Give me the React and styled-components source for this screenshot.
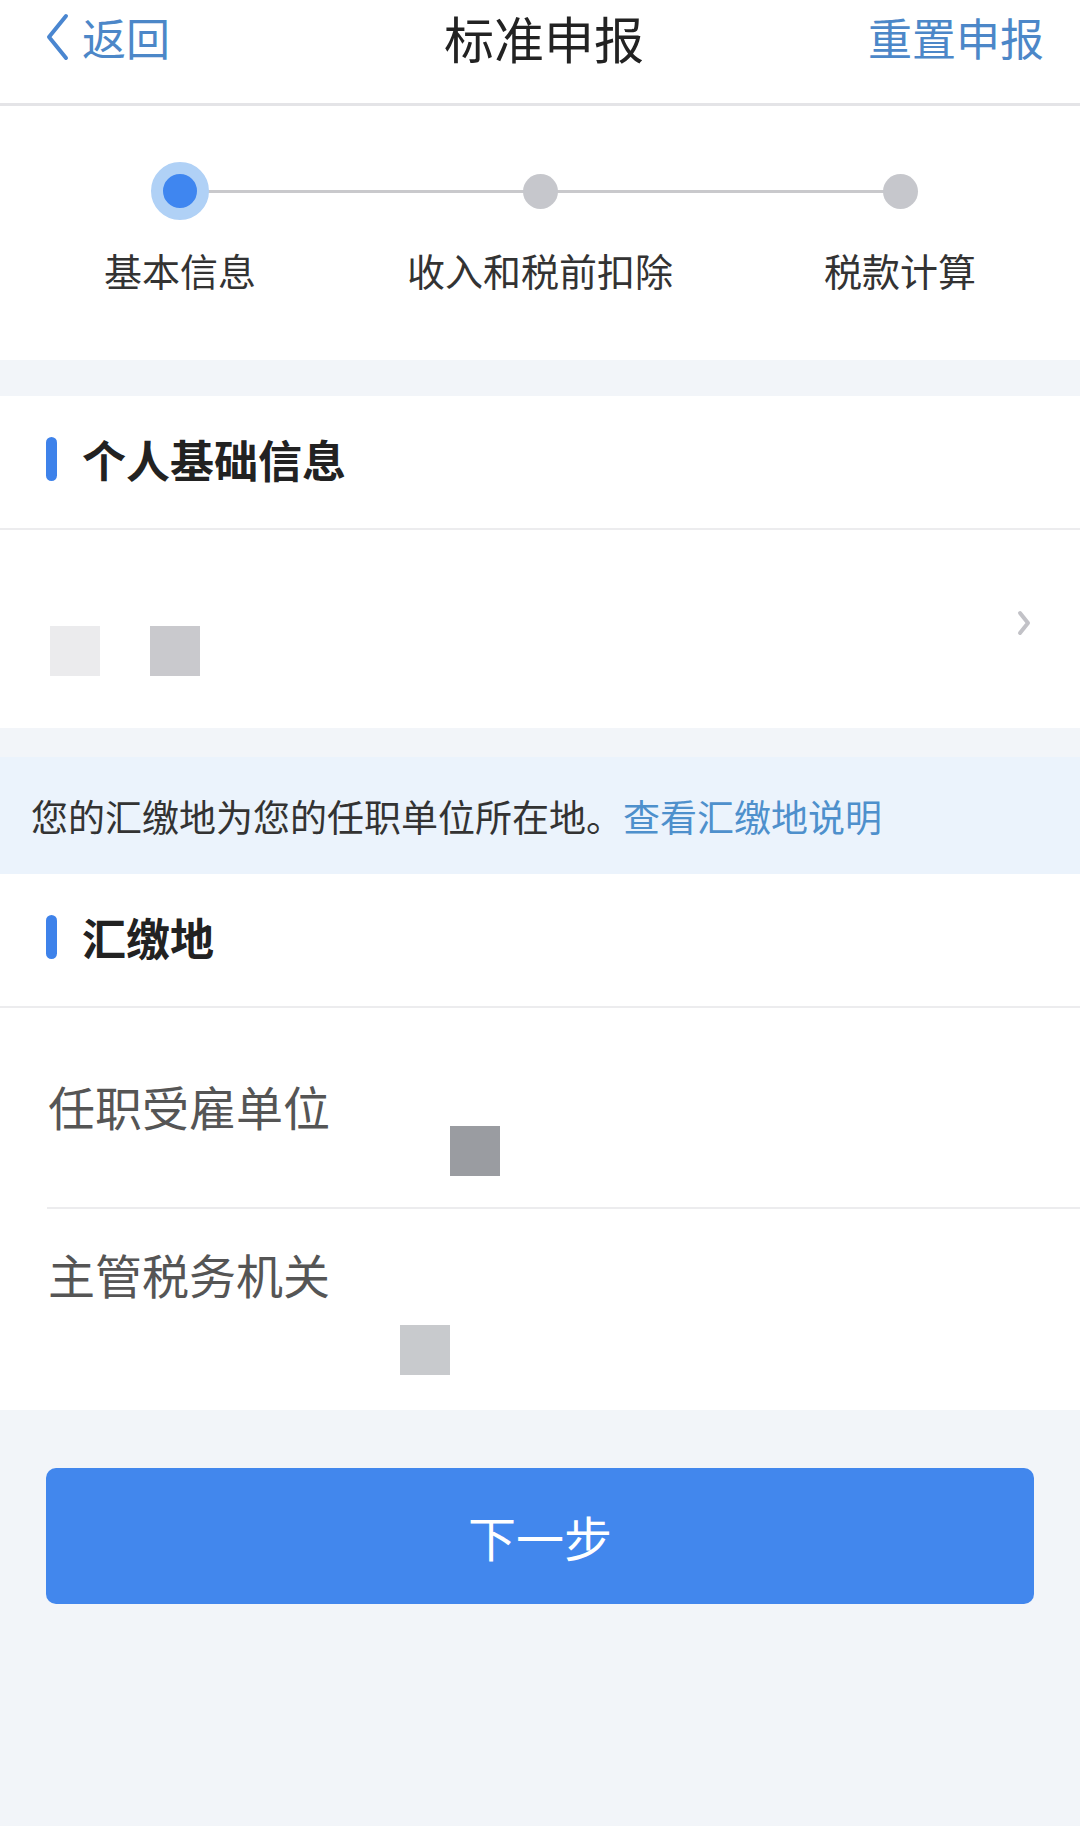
import React from "react";
import styled, { createGlobalStyle } from "styled-components";

const GlobalStyle = createGlobalStyle`
  html, body {
    margin: 0;
    padding: 0;
    background: #f2f5f9;
  }
  body {
    font-family: "Noto Sans CJK SC", "Noto Sans", sans-serif;
    color: #333;
  }
  * {
    box-sizing: border-box;
  }
`;

const steps = ["基本信息", "收入和税前扣除", "税款计算"];

function App() {
  return (
    <Page>
      <GlobalStyle />
      <Header>
        <Back>
          <svg width="26" height="48" viewBox="0 0 26 48">
            <path d="M22 3 L5 24 L22 45" fill="none" stroke="#4a86d0" strokeWidth="4" strokeLinecap="round" strokeLinejoin="round" />
          </svg>
          <span>返回</span>
        </Back>
        <Title>标准申报</Title>
        <Reset>重置申报</Reset>
      </Header>

      <Stepper>
        {steps.map((label, index) => (
          <Step key={label} last={index === steps.length - 1}>
            <DotBox>
              <Dot active={index === 0} />
            </DotBox>
            <StepLabel>{label}</StepLabel>
          </Step>
        ))}
      </Stepper>

      <Card>
        <SectionHead>
          <Bar />
          <SectionTitle>个人基础信息</SectionTitle>
        </SectionHead>
        <InfoRow>
          <Blocks>
            <Blur tone="#ebebed" />
            <Blur tone="#c9c9cd" />
          </Blocks>
          <Chevron width="16" height="28" viewBox="0 0 16 28">
            <path d="M4 4 L12 14 L4 24" fill="none" stroke="#c2c2c7" strokeWidth="4" strokeLinecap="round" strokeLinejoin="round" />
          </Chevron>
        </InfoRow>
      </Card>

      <Notice>
        您的汇缴地为您的任职单位所在地。<Link>查看汇缴地说明</Link>
      </Notice>

      <Card>
        <SectionHead>
          <Bar />
          <SectionTitle>汇缴地</SectionTitle>
        </SectionHead>
        <FieldRow labelTop={70} divider>
          <FieldLabel>任职受雇单位</FieldLabel>
          <Blur tone="#9a9ca1" style={{ marginTop: 118, marginLeft: 120 }} />
        </FieldRow>
        <FieldRow labelTop={37}>
          <FieldLabel>主管税务机关</FieldLabel>
          <Blur tone="#c8cacd" style={{ marginTop: 116, marginLeft: 70 }} />
        </FieldRow>
      </Card>

      <Footer>
        <NextButton>下一步</NextButton>
      </Footer>
    </Page>
  );
}

const Page = styled.div`
  width: 1080px;
  min-height: 1826px;
  background: #f2f5f9;
`;

const Header = styled.header`
  height: 106px;
  display: grid;
  grid-template-columns: 1fr auto 1fr;
  align-items: start;
  padding: 8px 36px 0 44px;
  background: #fff;
  border-bottom: 3px solid #e4e4e7;
`;

const Back = styled.div`
  display: flex;
  align-items: center;
  gap: 12px;
  height: 58px;
  color: #4c87c8;
  font-size: 44px;
  line-height: 58px;
`;

const Title = styled.h1`
  margin: 0;
  font-size: 50px;
  font-weight: 400;
  line-height: 58px;
  color: #222;
`;

const Reset = styled.div`
  justify-self: end;
  font-size: 44px;
  line-height: 58px;
  color: #4c87c8;
`;

const Stepper = styled.div`
  display: grid;
  grid-template-columns: repeat(3, 360px);
  background: #fff;
  padding: 56px 0 0;
  height: 254px;
  margin-bottom: 36px;
`;

const Step = styled.div`
  position: relative;
  display: flex;
  flex-direction: column;
  align-items: center;

  &::after {
    content: "";
    display: ${({ last }) => (last ? "none" : "block")};
    position: absolute;
    top: 28px;
    left: 50%;
    width: 100%;
    height: 3px;
    background: #c9c9cc;
  }
`;

const DotBox = styled.div`
  position: relative;
  z-index: 1;
  width: 58px;
  height: 58px;
  display: flex;
  align-items: center;
  justify-content: center;
`;

const Dot = styled.div`
  border-radius: 50%;
  ${({ active }) =>
    active
      ? `
    width: 58px;
    height: 58px;
    background: #3f86f0;
    border: 12px solid #b0d1f6;
  `
      : `
    width: 35px;
    height: 35px;
    background: #c6c7cc;
  `}
`;

const StepLabel = styled.div`
  margin-top: 26px;
  font-size: 38px;
  line-height: 48px;
  color: #333;
  white-space: nowrap;
`;

const Card = styled.section`
  background: #fff;
`;

const SectionHead = styled.div`
  height: 134px;
  display: flex;
  align-items: center;
  gap: 25px;
  padding: 0 0 6px 46px;
  border-bottom: 2px solid #ececee;
`;

const Bar = styled.div`
  width: 11px;
  height: 44px;
  border-radius: 6px;
  background: #3e82ea;
`;

const SectionTitle = styled.h2`
  margin: 0;
  font-size: 44px;
  font-weight: 700;
  color: #222;
`;

const InfoRow = styled.div`
  height: 198px;
  display: flex;
  align-items: center;
  justify-content: space-between;
  padding: 0 48px 0 50px;
`;

const Chevron = styled.svg`
  margin-bottom: 12px;
`;

const Blocks = styled.div`
  display: flex;
  gap: 50px;
  align-self: flex-end;
  margin-bottom: 52px;
`;

const Blur = styled.div`
  width: 50px;
  height: 50px;
  flex: none;
  background: ${({ tone }) => tone};
`;

const Notice = styled.div`
  margin-top: 29px;
  height: 117px;
  display: flex;
  align-items: center;
  padding-left: 31px;
  background: #ebf3fc;
  font-size: 37px;
  color: #333;
`;

const Link = styled.span`
  color: #4e90cc;
`;

const FieldRow = styled.div`
  position: relative;
  height: 201px;
  display: flex;
  align-items: flex-start;
  padding-left: 48px;

  &::after {
    content: "";
    display: ${({ divider }) => (divider ? "block" : "none")};
    position: absolute;
    left: 47px;
    right: 0;
    bottom: 0;
    height: 2px;
    background: #ececee;
  }

  & > span {
    margin-top: ${({ labelTop }) => labelTop}px;
  }
`;

const FieldLabel = styled.span`
  font-size: 47px;
  line-height: 56px;
  color: #555;
  white-space: nowrap;
`;

const Footer = styled.div`
  padding: 58px 46px 0;
`;

const NextButton = styled.button`
  width: 100%;
  height: 136px;
  border: none;
  border-radius: 10px;
  background: #4287ed;
  color: #fff;
  font-family: "Noto Sans CJK SC", sans-serif;
  font-size: 48px;
  cursor: pointer;
`;

export default App;
